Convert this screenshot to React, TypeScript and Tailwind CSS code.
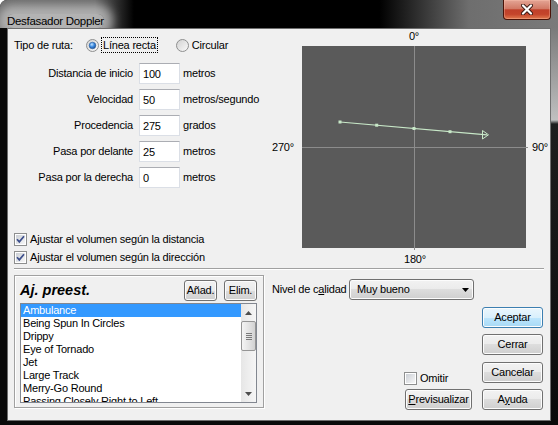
import clsx from 'clsx'

const txt = 'text-[11px] leading-[13px] tracking-[-0.2px] text-black'

const presets = [
  'Ambulance',
  'Being Spun In Circles',
  'Drippy',
  'Eye of Tornado',
  'Jet',
  'Large Track',
  'Merry-Go Round',
  'Passing Closely Right to Left',
]

const rows = [
  { label: 'Distancia de inicio', value: '100', unit: 'metros' },
  { label: 'Velocidad', value: '50', unit: 'metros/segundo' },
  { label: 'Procedencia', value: '275', unit: 'grados' },
  { label: 'Pasa por delante', value: '25', unit: 'metros' },
  { label: 'Pasa por la derecha', value: '0', unit: 'metros' },
]

function Radio({ checked }: { checked?: boolean }) {
  return (
    <svg width="13" height="13" viewBox="0 0 13 13" className="shrink-0">
      <defs>
        <linearGradient id="rb-bg" x1="0" y1="0" x2="1" y2="1">
          <stop offset="0" stopColor="#d0d0d0" />
          <stop offset="1" stopColor="#fbfbfb" />
        </linearGradient>
        <radialGradient id="rb-dot" cx="0.4" cy="0.35" r="0.7">
          <stop offset="0" stopColor="#c4e4ff" />
          <stop offset="0.5" stopColor="#3b8ae0" />
          <stop offset="1" stopColor="#17468c" />
        </radialGradient>
      </defs>
      <circle cx="6.5" cy="6.5" r="6" fill="url(#rb-bg)" stroke="#8e8f8f" />
      {checked && <circle cx="6.5" cy="6.5" r="3.3" fill="url(#rb-dot)" stroke="#2a5d9c" strokeWidth="0.6" />}
    </svg>
  )
}

function CheckBox({ checked }: { checked?: boolean }) {
  return (
    <svg width="13" height="13" viewBox="0 0 13 13" className="shrink-0">
      <defs>
        <linearGradient id="cb-bg" x1="0" y1="0" x2="1" y2="1">
          <stop offset="0" stopColor="#cbcfd5" />
          <stop offset="1" stopColor="#f7f7f7" />
        </linearGradient>
      </defs>
      <rect x="0.5" y="0.5" width="12" height="12" fill="#fff" stroke="#8e8f8f" />
      <rect x="2" y="2" width="9" height="9" fill="url(#cb-bg)" />
      {checked && <path d="M3 6.3 L5.3 8.9 L10 3.3" fill="none" stroke="#3d4f8c" strokeWidth="1.7" />}
    </svg>
  )
}

function WinButton({ children, className, primary }: { children: React.ReactNode; className?: string; primary?: boolean }) {
  return (
    <button
      className={clsx(
        'h-[21px] rounded-[3px] border flex items-center justify-center shadow-[inset_0_0_0_1px_#fcfcfc]',
        txt,
        primary
          ? 'border-[#3c7fb1] bg-[linear-gradient(to_bottom,#eaf6fd_0%,#d9f0fc_50%,#bee6fd_50%,#a7d9f5_100%)]'
          : 'border-[#707070] bg-[linear-gradient(to_bottom,#f2f2f2_0%,#ebebeb_50%,#dddddd_50%,#cfcfcf_100%)]',
        className,
      )}
    >
      {children}
    </button>
  )
}

function Chart() {
  const pts = [
    [38, 76],
    [74.7, 79.2],
    [112, 82.5],
    [148, 85.7],
  ]
  return (
    <svg width="224" height="202" viewBox="0 0 224 202" className="block overflow-visible">
      <rect width="224" height="202" fill="#5a5a5a" />
      <line x1="112.5" y1="0" x2="112.5" y2="204" stroke="#8c8c8c" />
      <line x1="0" y1="101.5" x2="226" y2="101.5" stroke="#8c8c8c" />
      <line x1="38" y1="76" x2="185" y2="88.8" stroke="#c8e8c8" strokeWidth="1.2" />
      {pts.map(([x, y]) => (
        <rect key={x} x={x - 1.5} y={y - 1.5} width="3" height="3" fill="#c8e8c8" />
      ))}
      <path d="M180.5 84.5 L180.5 93 L186.5 88.8 Z" fill="none" stroke="#c8e8c8" />
    </svg>
  )
}

export default function App() {
  return (
    <div className="w-[558px] h-[425px] flex flex-col bg-[#080808] rounded-t-[7px] overflow-hidden font-['Liberation_Sans',Arial,sans-serif]">
      {/* title bar */}
      <div className="h-[28px] shrink-0 flex justify-between bg-[linear-gradient(to_right,#6c6c6c_0%,#6a6a6a_17%,#000_24%,#000_68%,#6e6e6e_84%,#7a7a7a_100%)]">
        <div className="pl-[7px] pt-[8px]">
          <span className="inline-block text-[11.5px] leading-[14px] tracking-[-0.3px] text-black bg-[rgba(210,210,210,0.7)] rounded-[6px] shadow-[0_0_10px_9px_rgba(210,210,210,0.65)]">
            Desfasador Doppler
          </span>
        </div>
        <div className="mr-[7px] w-[48px] h-[20px] rounded-b-[4px] border border-t-0 border-[#4a1308] bg-[linear-gradient(to_bottom,#e4a595_0%,#d27a66_45%,#c0402a_52%,#c4442b_75%,#e0794e_100%)] shadow-[inset_0_0_0_1px_rgba(255,200,180,0.35)] flex items-center justify-center">
          <svg width="12" height="11" viewBox="0 0 12 11">
            <path d="M2 1.5 L10 9.5 M10 1.5 L2 9.5" stroke="#3b1a14" strokeWidth="4" strokeLinecap="round" />
            <path d="M2 1.5 L10 9.5 M10 1.5 L2 9.5" stroke="#fff" strokeWidth="2.2" strokeLinecap="round" />
          </svg>
        </div>
      </div>

      <div className="flex flex-1">
        <div className="w-[7px] bg-[#0a0a0a]" />
        {/* client */}
        <div className="w-[544px] border border-[#6e6e6e] bg-[#f0f0f0] px-[6px]">
          {/* top section */}
          <div className="flex h-[239px]">
            <div className="w-[258px] shrink-0 pt-[8px]">
              <div className="h-[16px] flex items-center">
                <span className={clsx(txt, 'w-[72px]')}>Tipo de ruta:</span>
                <Radio checked />
                <span className={clsx(txt, 'ml-[2px] px-[1px] h-[16px] flex items-center border border-dotted border-black')}>Línea recta</span>
                <span className="ml-[18px]">
                  <Radio />
                </span>
                <span className={clsx(txt, 'ml-[3px]')}>Circular</span>
              </div>

              <div className="mt-[10px] flex flex-col gap-[5px]">
                {rows.map((r) => (
                  <div key={r.label} className="h-[21px] flex items-center">
                    <span className={clsx(txt, 'w-[119px] text-right')}>{r.label}</span>
                    <input
                      readOnly
                      value={r.value}
                      className={clsx(
                        txt,
                        'ml-[6px] w-[41px] h-[21px] px-[3px] bg-white border border-[#dbdfe6] border-t-[#abadb3] outline-none',
                      )}
                    />
                    <span className={clsx(txt, 'ml-[3px]')}>{r.unit}</span>
                  </div>
                ))}
              </div>

              <div className="mt-[42px]">
                <div className="h-[18px] flex items-center gap-[3px]">
                  <CheckBox checked />
                  <span className={txt}>Ajustar el volumen según la distancia</span>
                </div>
                <div className="h-[18px] flex items-center gap-[3px]">
                  <CheckBox checked />
                  <span className={txt}>Ajustar el volumen según la dirección</span>
                </div>
              </div>
            </div>

            {/* chart */}
            <div className="shrink-0 grid grid-cols-[30px_224px_auto] grid-rows-[17px_202px_auto]">
              <div />
              <div className={clsx(txt, 'pt-[1px] text-center')}>0°</div>
              <div />
              <div className={clsx(txt, 'self-center')}>270°</div>
              <div>
                <Chart />
              </div>
              <div className={clsx(txt, 'self-center pl-[6px] whitespace-nowrap')}>90°</div>
              <div />
              <div className={clsx(txt, 'pt-[5px] text-center pl-[2px]')}>180°</div>
              <div />
            </div>
          </div>

          {/* separator */}
          <div className="h-[2px] border-t border-[#a0a0a0] border-b border-b-white" />

          {/* bottom section */}
          <div className="flex pt-[5px]">
            <div className="w-[250px] h-[133px] shrink-0 border border-[#a0a0a0] shadow-[inset_1px_1px_0_#fff,1px_1px_0_#fff] pl-[5px] pr-[6px] pt-[6px]">
              <div className="h-[16px] flex items-center">
                <span className="text-[14.5px] leading-[16px] font-bold italic text-black flex-1">Aj. preest.</span>
                <WinButton className="w-[33px] h-[15px]">Añad.</WinButton>
                <WinButton className="w-[33px] h-[15px] ml-[7px]">Elim.</WinButton>
              </div>
              <div className="mt-[5px] h-[100px] border border-[#828790] bg-white flex">
                <div className="flex-1 overflow-hidden">
                  {presets.map((p, i) => (
                    <div
                      key={p}
                      className={clsx(
                        'h-[13px] px-[2px] whitespace-nowrap text-[11px] leading-[13px] tracking-[-0.2px]',
                        i === 0 ? 'bg-[#3399ff] text-white' : 'text-black',
                      )}
                    >
                      {p}
                    </div>
                  ))}
                </div>
                <div className="w-[15px] flex flex-col bg-[linear-gradient(to_right,#e6e6e6,#f6f6f6)]">
                  <div className="h-[17px] flex items-center justify-center">
                    <svg width="7" height="4" viewBox="0 0 7 4">
                      <path d="M0 4 L3.5 0 L7 4 Z" fill="#4d4d4d" />
                    </svg>
                  </div>
                  <div className="h-[30px] rounded-[2px] border border-[#959595] bg-[linear-gradient(to_right,#f4f4f4,#e4e4e4_50%,#d2d2d2)] flex flex-col items-center justify-center gap-[1px]">
                    <div className="w-[6px] h-[1px] bg-[#7a7a7a]" />
                    <div className="w-[6px] h-[1px] bg-[#7a7a7a]" />
                    <div className="w-[6px] h-[1px] bg-[#7a7a7a]" />
                    <div className="w-[6px] h-[1px] bg-[#7a7a7a]" />
                  </div>
                  <div className="flex-1" />
                  <div className="h-[17px] flex items-center justify-center">
                    <svg width="7" height="4" viewBox="0 0 7 4">
                      <path d="M0 0 L3.5 4 L7 0 Z" fill="#4d4d4d" />
                    </svg>
                  </div>
                </div>
              </div>
            </div>

            <div className="ml-[8px] w-[271px] flex flex-col">
              <div className="mt-[4px] h-[21px] flex items-center">
                <span className={clsx(txt, 'w-[77px]')}>
                  Nivel de c<span className="underline">a</span>lidad
                </span>
                <div className="w-[125px] h-[21px] rounded-[3px] border border-[#707070] bg-[linear-gradient(to_bottom,#f2f2f2_0%,#ebebeb_50%,#dddddd_50%,#cfcfcf_100%)] shadow-[inset_0_0_0_1px_#fcfcfc] flex items-center pl-[7px] pr-[4px]">
                  <span className={clsx(txt, 'flex-1')}>Muy bueno</span>
                  <svg width="7" height="4" viewBox="0 0 7 4">
                    <path d="M0 0 L3.5 4 L7 0 Z" fill="#000" />
                  </svg>
                </div>
              </div>

              <div className="mt-[7px] flex justify-end items-end">
                <div className="flex flex-col items-start gap-[4px] mr-[10px]">
                  <div className="h-[13px] flex items-center gap-[3px]">
                    <CheckBox />
                    <span className={txt}>Omitir</span>
                  </div>
                  <WinButton className="w-[67px] ml-[1px]">
                    <span>
                      <span className="underline">P</span>revisualizar
                    </span>
                  </WinButton>
                </div>
                <div className="w-[61px] flex flex-col gap-[6px]">
                  <WinButton primary>Aceptar</WinButton>
                  <WinButton>Cerrar</WinButton>
                  <WinButton className="mt-[1px]">Cancelar</WinButton>
                  <WinButton>
                    <span>
                      A<span className="underline">y</span>uda
                    </span>
                  </WinButton>
                </div>
              </div>
            </div>
          </div>
        </div>
        <div className="w-[7px] bg-[linear-gradient(to_bottom,#7a7a7a_0px,#c0c0c0_92px,#1e1e1e_96px,#0a0a0a_100%)]" />
      </div>
      <div className="h-[4px] shrink-0 bg-[#0a0a0a]" />
    </div>
  )
}
